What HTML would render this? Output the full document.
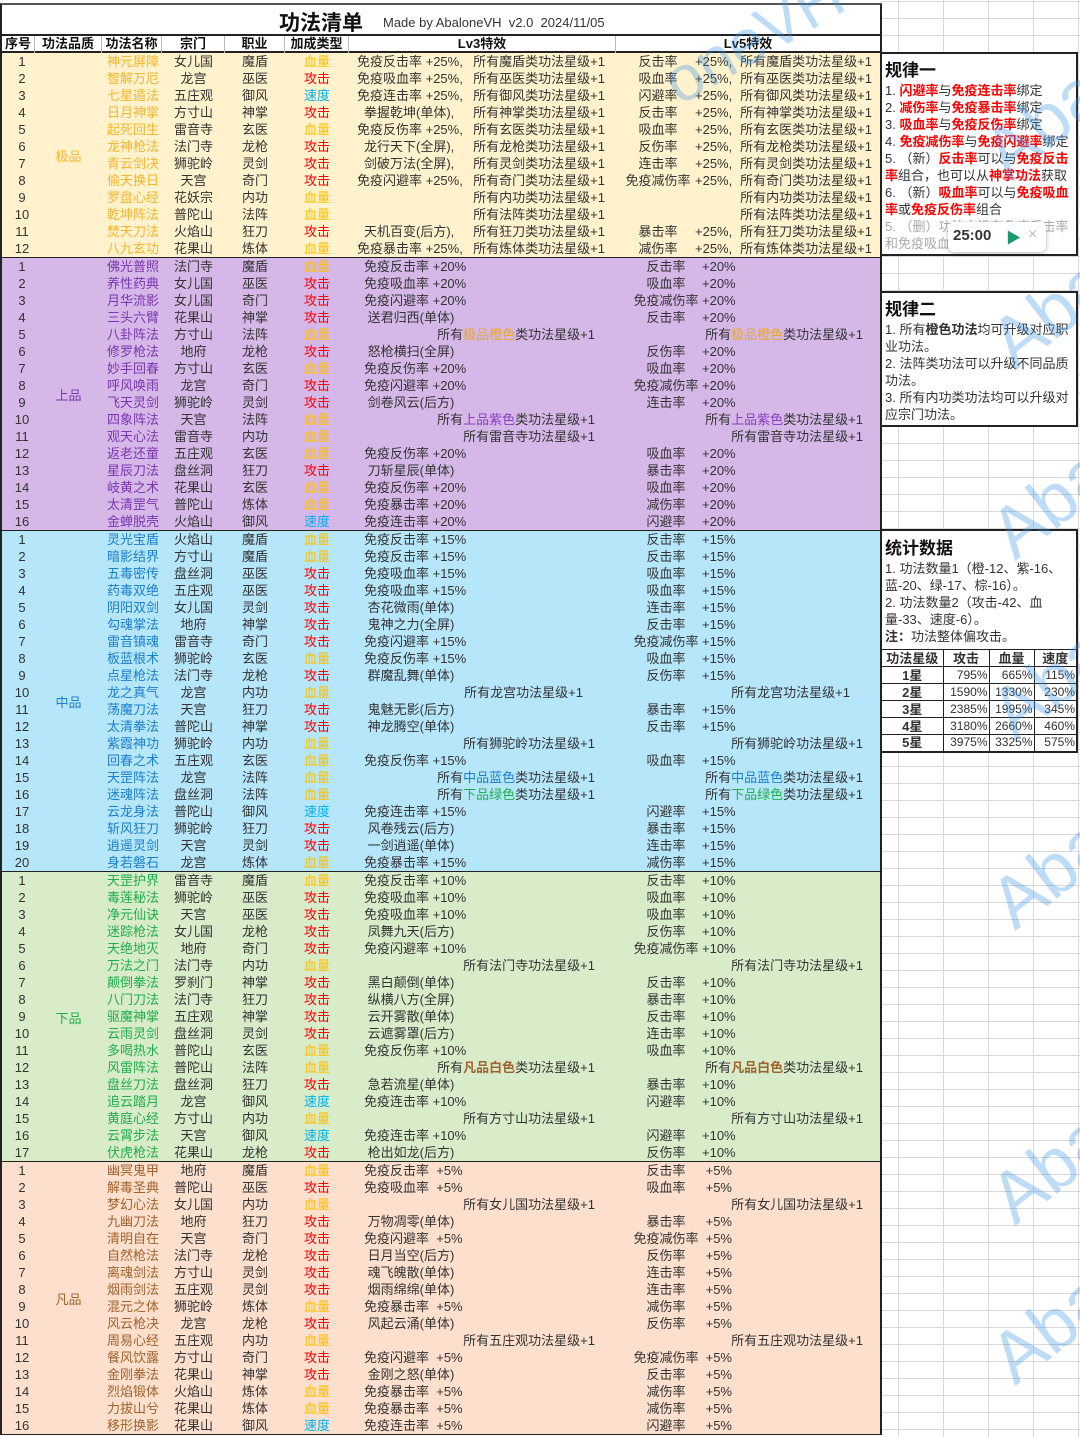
<!DOCTYPE html>
<html><head><meta charset="utf-8">
<style>
*{margin:0;padding:0;box-sizing:border-box}
body{width:1080px;height:1437px;overflow:hidden;background:#fff;font-family:"Liberation Sans","Noto Sans CJK SC",sans-serif;font-size:13px;color:#333;position:relative}
#grid{position:absolute;left:880px;top:0;width:200px;height:1437px;
background-image:linear-gradient(to right,#d9d9d9 1px,transparent 1px),linear-gradient(to bottom,#d9d9d9 1px,transparent 1px);
background-size:45px 17px;background-position:18px 1px}
#main{position:absolute;left:0;top:3px;width:882px;border-left:2px solid #222;border-right:2px solid #222;border-top:2px solid #555}
#title{height:31px;border-bottom:2px solid #222;position:relative;background:#fff}
#title .t1{position:absolute;left:277px;top:2px;font-size:21px;font-weight:bold;color:#111}
#title .t2{position:absolute;left:381px;top:10px;font-size:13px;color:#333;white-space:pre}
#hdr{height:17px;border-bottom:2px solid #222;position:relative;font-weight:bold;color:#111;line-height:16px;background:#fff}
#hdr span{position:absolute;top:0;text-align:center;height:17px;border-right:1px solid #bbb}
.sec{position:relative;border-bottom:1.5px solid #222}
.q{position:absolute;left:33px;width:67px;top:50%;margin-top:-9px;text-align:center;font-size:13px}
.r{position:relative;height:17px;line-height:17px;white-space:pre}
.r span{position:absolute;top:0}
.n{left:0;width:40px;text-align:center}
.m{left:100px;width:62px;text-align:center}
.s{left:160px;width:63px;text-align:center}
.j{left:223px;width:60px;text-align:center}
.t{left:283px;width:64px;text-align:center}
.h{color:#ffc000}.k{color:#f00}.v{color:#00b0f0}
.a{left:362px}
.b{right:285px}
.c{left:629px;width:70px;text-align:center}
.d{left:700px}
.e{right:17px}
.s1{background:#fff2cc}.s1 .m,.s1 .q{color:#f5b530}
.s1 .a{left:355px}.s1 .b{right:275px}.s1 .c{left:621px}.s1 .d{left:693px}.s1 .e{right:8px}
.s2{background:#d5b8e8}.s2 .m,.s2 .q{color:#7a35b0}
.s3{background:#b6e6fa}.s3 .m,.s3 .q{color:#1a7fcc}
.s4{background:#d8ecca}.s4 .m,.s4 .q{color:#1fae4a}
.s5{background:#fcdfcc}.s5 .m,.s5 .q{color:#a0632e}
.co{color:#e8a820}.cp{color:#8a3cc0}.cb{color:#1a7fcc}.cg{color:#1fae4a}.cw{color:#a0632e}
.box{position:absolute;left:880px;width:198px;background:#fff;border:2px solid #222;padding:0 3px;line-height:17px;font-size:13px;color:#333;overflow:hidden}
.box h3{font-size:17px;font-weight:bold;color:#111;line-height:22px}
.rd{color:#f00;font-weight:bold}
#st{position:absolute;left:880px;top:649px;width:198px;border:2px solid #222;border-top:1px solid #222;background:#fff;border-collapse:collapse;font-size:12px;table-layout:fixed}
#st td{border:1px solid #222;height:17px;line-height:15px;padding:0 1px;overflow:hidden;white-space:nowrap}
#st tr:first-child td{font-weight:bold;text-align:center;font-size:13px}
#st td:first-child{font-weight:bold;text-align:center;width:62px;font-size:13px}
#st td.x{text-align:right}
#timer{position:absolute;left:948px;top:222px;width:98px;height:30px;background:#fff;border-radius:6px;box-shadow:0 1px 5px rgba(0,0,0,.3)}
.wm{position:absolute;font-family:"Liberation Sans",sans-serif;color:rgba(60,150,230,.33);font-size:72px;transform-origin:left top;white-space:nowrap;pointer-events:none}
</style></head><body>
<div id="grid"></div>
<div id="main">
<div id="title"><span class="t1">功法清单</span><span class="t2">Made by AbaloneVH  v2.0  2024/11/05</span></div>
<div id="hdr">
<span style="left:0;width:33px">序号</span><span style="left:33px;width:67px">功法品质</span><span style="left:100px;width:60px">功法名称</span><span style="left:160px;width:63px">宗门</span><span style="left:223px;width:60px">职业</span><span style="left:283px;width:64px">加成类型</span><span style="left:347px;width:267px">Lv3特效</span><span style="left:614px;width:264px;border-right:none">Lv5特效</span>
</div>

<div class="sec s1"><span class="q">极品</span>
<div class="r"><span class="n">1</span><span class="m">神元屏障</span><span class="s">女儿国</span><span class="j">魔盾</span><span class="t h">血量</span><span class="a">免疫反击率 +25%,</span><span class="b">所有魔盾类功法星级+1</span><span class="c">反击率</span><span class="d">+25%,</span><span class="e">所有魔盾类功法星级+1</span></div>
<div class="r"><span class="n">2</span><span class="m">智解万厄</span><span class="s">龙宫</span><span class="j">巫医</span><span class="t k">攻击</span><span class="a">免疫吸血率 +25%,</span><span class="b">所有巫医类功法星级+1</span><span class="c">吸血率</span><span class="d">+25%,</span><span class="e">所有巫医类功法星级+1</span></div>
<div class="r"><span class="n">3</span><span class="m">七星遁法</span><span class="s">五庄观</span><span class="j">御风</span><span class="t v">速度</span><span class="a">免疫连击率 +25%,</span><span class="b">所有御风类功法星级+1</span><span class="c">闪避率</span><span class="d">+25%,</span><span class="e">所有御风类功法星级+1</span></div>
<div class="r"><span class="n">4</span><span class="m">日月神掌</span><span class="s">方寸山</span><span class="j">神掌</span><span class="t k">攻击</span><span class="a" style="left:362px">拳握乾坤(单体),</span><span class="b">所有神掌类功法星级+1</span><span class="c">反击率</span><span class="d">+25%,</span><span class="e">所有神掌类功法星级+1</span></div>
<div class="r"><span class="n">5</span><span class="m">起死回生</span><span class="s">雷音寺</span><span class="j">玄医</span><span class="t h">血量</span><span class="a">免疫反伤率 +25%,</span><span class="b">所有玄医类功法星级+1</span><span class="c">吸血率</span><span class="d">+25%,</span><span class="e">所有玄医类功法星级+1</span></div>
<div class="r"><span class="n">6</span><span class="m">龙神枪法</span><span class="s">法门寺</span><span class="j">龙枪</span><span class="t k">攻击</span><span class="a" style="left:362px">龙行天下(全屏),</span><span class="b">所有龙枪类功法星级+1</span><span class="c">反伤率</span><span class="d">+25%,</span><span class="e">所有龙枪类功法星级+1</span></div>
<div class="r"><span class="n">7</span><span class="m">青云剑决</span><span class="s">狮驼岭</span><span class="j">灵剑</span><span class="t k">攻击</span><span class="a" style="left:362px">剑破万法(全屏),</span><span class="b">所有灵剑类功法星级+1</span><span class="c">连击率</span><span class="d">+25%,</span><span class="e">所有灵剑类功法星级+1</span></div>
<div class="r"><span class="n">8</span><span class="m">偷天换日</span><span class="s">天宫</span><span class="j">奇门</span><span class="t k">攻击</span><span class="a">免疫闪避率 +25%,</span><span class="b">所有奇门类功法星级+1</span><span class="c">免疫减伤率</span><span class="d">+25%,</span><span class="e">所有奇门类功法星级+1</span></div>
<div class="r"><span class="n">9</span><span class="m">罗盘心经</span><span class="s">花妖宗</span><span class="j">内功</span><span class="t h">血量</span><span class="b">所有内功类功法星级+1</span><span class="e">所有内功类功法星级+1</span></div>
<div class="r"><span class="n">10</span><span class="m">乾坤阵法</span><span class="s">普陀山</span><span class="j">法阵</span><span class="t h">血量</span><span class="b">所有法阵类功法星级+1</span><span class="e">所有法阵类功法星级+1</span></div>
<div class="r"><span class="n">11</span><span class="m">焚天刀法</span><span class="s">火焰山</span><span class="j">狂刀</span><span class="t k">攻击</span><span class="a" style="left:362px">天机百变(后方),</span><span class="b">所有狂刀类功法星级+1</span><span class="c">暴击率</span><span class="d">+25%,</span><span class="e">所有狂刀类功法星级+1</span></div>
<div class="r"><span class="n">12</span><span class="m">八九玄功</span><span class="s">花果山</span><span class="j">炼体</span><span class="t h">血量</span><span class="a">免疫暴击率 +25%,</span><span class="b">所有炼体类功法星级+1</span><span class="c">减伤率</span><span class="d">+25%,</span><span class="e">所有炼体类功法星级+1</span></div>
</div>

<div class="sec s2"><span class="q">上品</span>
<div class="r"><span class="n">1</span><span class="m">佛光普照</span><span class="s">法门寺</span><span class="j">魔盾</span><span class="t h">血量</span><span class="a">免疫反击率 +20%</span><span class="c">反击率</span><span class="d">+20%</span></div>
<div class="r"><span class="n">2</span><span class="m">养性药典</span><span class="s">女儿国</span><span class="j">巫医</span><span class="t k">攻击</span><span class="a">免疫吸血率 +20%</span><span class="c">吸血率</span><span class="d">+20%</span></div>
<div class="r"><span class="n">3</span><span class="m">月华流影</span><span class="s">女儿国</span><span class="j">奇门</span><span class="t k">攻击</span><span class="a">免疫闪避率 +20%</span><span class="c">免疫减伤率</span><span class="d">+20%</span></div>
<div class="r"><span class="n">4</span><span class="m">三头六臂</span><span class="s">花果山</span><span class="j">神掌</span><span class="t k">攻击</span><span class="a"> 送君归西(单体)</span><span class="c">反击率</span><span class="d">+20%</span></div>
<div class="r"><span class="n">5</span><span class="m">八卦阵法</span><span class="s">方寸山</span><span class="j">法阵</span><span class="t h">血量</span><span class="b">所有<span class="co" style="position:static">极品橙色</span>类功法星级+1</span><span class="e">所有<span class="co" style="position:static">极品橙色</span>类功法星级+1</span></div>
<div class="r"><span class="n">6</span><span class="m">修罗枪法</span><span class="s">地府</span><span class="j">龙枪</span><span class="t k">攻击</span><span class="a"> 怒枪横扫(全屏)</span><span class="c">反伤率</span><span class="d">+20%</span></div>
<div class="r"><span class="n">7</span><span class="m">妙手回春</span><span class="s">方寸山</span><span class="j">玄医</span><span class="t h">血量</span><span class="a">免疫反伤率 +20%</span><span class="c">吸血率</span><span class="d">+20%</span></div>
<div class="r"><span class="n">8</span><span class="m">呼风唤雨</span><span class="s">龙宫</span><span class="j">奇门</span><span class="t k">攻击</span><span class="a">免疫闪避率 +20%</span><span class="c">免疫减伤率</span><span class="d">+20%</span></div>
<div class="r"><span class="n">9</span><span class="m">飞天灵剑</span><span class="s">狮驼岭</span><span class="j">灵剑</span><span class="t k">攻击</span><span class="a"> 剑卷风云(后方)</span><span class="c">连击率</span><span class="d">+20%</span></div>
<div class="r"><span class="n">10</span><span class="m">四象阵法</span><span class="s">天宫</span><span class="j">法阵</span><span class="t h">血量</span><span class="b">所有<span class="cp" style="position:static">上品紫色</span>类功法星级+1</span><span class="e">所有<span class="cp" style="position:static">上品紫色</span>类功法星级+1</span></div>
<div class="r"><span class="n">11</span><span class="m">观天心法</span><span class="s">雷音寺</span><span class="j">内功</span><span class="t h">血量</span><span class="b">所有雷音寺功法星级+1</span><span class="e">所有雷音寺功法星级+1</span></div>
<div class="r"><span class="n">12</span><span class="m">返老还童</span><span class="s">五庄观</span><span class="j">玄医</span><span class="t h">血量</span><span class="a">免疫反伤率 +20%</span><span class="c">吸血率</span><span class="d">+20%</span></div>
<div class="r"><span class="n">13</span><span class="m">星辰刀法</span><span class="s">盘丝洞</span><span class="j">狂刀</span><span class="t k">攻击</span><span class="a"> 刀斩星辰(单体)</span><span class="c">暴击率</span><span class="d">+20%</span></div>
<div class="r"><span class="n">14</span><span class="m">岐黄之术</span><span class="s">花果山</span><span class="j">玄医</span><span class="t h">血量</span><span class="a">免疫反伤率 +20%</span><span class="c">吸血率</span><span class="d">+20%</span></div>
<div class="r"><span class="n">15</span><span class="m">太清罡气</span><span class="s">普陀山</span><span class="j">炼体</span><span class="t h">血量</span><span class="a">免疫暴击率 +20%</span><span class="c">减伤率</span><span class="d">+20%</span></div>
<div class="r"><span class="n">16</span><span class="m">金蝉脱壳</span><span class="s">火焰山</span><span class="j">御风</span><span class="t v">速度</span><span class="a">免疫连击率 +20%</span><span class="c">闪避率</span><span class="d">+20%</span></div>
</div>

<div class="sec s3"><span class="q">中品</span>
<div class="r"><span class="n">1</span><span class="m">灵光宝盾</span><span class="s">火焰山</span><span class="j">魔盾</span><span class="t h">血量</span><span class="a">免疫反击率 +15%</span><span class="c">反击率</span><span class="d">+15%</span></div>
<div class="r"><span class="n">2</span><span class="m">暗影结界</span><span class="s">方寸山</span><span class="j">魔盾</span><span class="t h">血量</span><span class="a">免疫反击率 +15%</span><span class="c">反击率</span><span class="d">+15%</span></div>
<div class="r"><span class="n">3</span><span class="m">五毒密传</span><span class="s">盘丝洞</span><span class="j">巫医</span><span class="t k">攻击</span><span class="a">免疫吸血率 +15%</span><span class="c">吸血率</span><span class="d">+15%</span></div>
<div class="r"><span class="n">4</span><span class="m">药毒双绝</span><span class="s">五庄观</span><span class="j">巫医</span><span class="t k">攻击</span><span class="a">免疫吸血率 +15%</span><span class="c">吸血率</span><span class="d">+15%</span></div>
<div class="r"><span class="n">5</span><span class="m">阴阳双剑</span><span class="s">女儿国</span><span class="j">灵剑</span><span class="t k">攻击</span><span class="a"> 杏花微雨(单体)</span><span class="c">连击率</span><span class="d">+15%</span></div>
<div class="r"><span class="n">6</span><span class="m">勾魂掌法</span><span class="s">地府</span><span class="j">神掌</span><span class="t k">攻击</span><span class="a"> 鬼神之力(全屏)</span><span class="c">反击率</span><span class="d">+15%</span></div>
<div class="r"><span class="n">7</span><span class="m">雷音镇魂</span><span class="s">雷音寺</span><span class="j">奇门</span><span class="t k">攻击</span><span class="a">免疫闪避率 +15%</span><span class="c">免疫减伤率</span><span class="d">+15%</span></div>
<div class="r"><span class="n">8</span><span class="m">板蓝根术</span><span class="s">狮驼岭</span><span class="j">玄医</span><span class="t h">血量</span><span class="a">免疫反伤率 +15%</span><span class="c">吸血率</span><span class="d">+15%</span></div>
<div class="r"><span class="n">9</span><span class="m">点星枪法</span><span class="s">法门寺</span><span class="j">龙枪</span><span class="t k">攻击</span><span class="a"> 群魔乱舞(单体)</span><span class="c">反伤率</span><span class="d">+15%</span></div>
<div class="r"><span class="n">10</span><span class="m">龙之真气</span><span class="s">龙宫</span><span class="j">内功</span><span class="t h">血量</span><span class="b" style="right:297px">所有龙宫功法星级+1</span><span class="e" style="right:30px">所有龙宫功法星级+1</span></div>
<div class="r"><span class="n">11</span><span class="m">荡魔刀法</span><span class="s">天宫</span><span class="j">狂刀</span><span class="t k">攻击</span><span class="a"> 鬼魅无影(后方)</span><span class="c">暴击率</span><span class="d">+15%</span></div>
<div class="r"><span class="n">12</span><span class="m">太清拳法</span><span class="s">普陀山</span><span class="j">神掌</span><span class="t k">攻击</span><span class="a"> 神龙腾空(单体)</span><span class="c">反击率</span><span class="d">+15%</span></div>
<div class="r"><span class="n">13</span><span class="m">紫霞神功</span><span class="s">狮驼岭</span><span class="j">内功</span><span class="t h">血量</span><span class="b">所有狮驼岭功法星级+1</span><span class="e">所有狮驼岭功法星级+1</span></div>
<div class="r"><span class="n">14</span><span class="m">回春之术</span><span class="s">五庄观</span><span class="j">玄医</span><span class="t h">血量</span><span class="a">免疫反伤率 +15%</span><span class="c">吸血率</span><span class="d">+15%</span></div>
<div class="r"><span class="n">15</span><span class="m">天罡阵法</span><span class="s">龙宫</span><span class="j">法阵</span><span class="t h">血量</span><span class="b">所有<span class="cb" style="position:static">中品蓝色</span>类功法星级+1</span><span class="e">所有<span class="cb" style="position:static">中品蓝色</span>类功法星级+1</span></div>
<div class="r"><span class="n">16</span><span class="m">迷魂阵法</span><span class="s">盘丝洞</span><span class="j">法阵</span><span class="t h">血量</span><span class="b">所有<span class="cg" style="position:static">下品绿色</span>类功法星级+1</span><span class="e">所有<span class="cg" style="position:static">下品绿色</span>类功法星级+1</span></div>
<div class="r"><span class="n">17</span><span class="m">云龙身法</span><span class="s">普陀山</span><span class="j">御风</span><span class="t v">速度</span><span class="a">免疫连击率 +15%</span><span class="c">闪避率</span><span class="d">+15%</span></div>
<div class="r"><span class="n">18</span><span class="m">斩风狂刀</span><span class="s">狮驼岭</span><span class="j">狂刀</span><span class="t k">攻击</span><span class="a"> 风卷残云(后方)</span><span class="c">暴击率</span><span class="d">+15%</span></div>
<div class="r"><span class="n">19</span><span class="m">逍遥灵剑</span><span class="s">天宫</span><span class="j">灵剑</span><span class="t k">攻击</span><span class="a"> 一剑逍遥(单体)</span><span class="c">连击率</span><span class="d">+15%</span></div>
<div class="r"><span class="n">20</span><span class="m">身若磐石</span><span class="s">龙宫</span><span class="j">炼体</span><span class="t h">血量</span><span class="a">免疫暴击率 +15%</span><span class="c">减伤率</span><span class="d">+15%</span></div>
</div>

<div class="sec s4"><span class="q">下品</span>
<div class="r"><span class="n">1</span><span class="m">天罡护界</span><span class="s">雷音寺</span><span class="j">魔盾</span><span class="t h">血量</span><span class="a">免疫反击率 +10%</span><span class="c">反击率</span><span class="d">+10%</span></div>
<div class="r"><span class="n">2</span><span class="m">毒莲秘法</span><span class="s">狮驼岭</span><span class="j">巫医</span><span class="t k">攻击</span><span class="a">免疫吸血率 +10%</span><span class="c">吸血率</span><span class="d">+10%</span></div>
<div class="r"><span class="n">3</span><span class="m">净元仙诀</span><span class="s">天宫</span><span class="j">巫医</span><span class="t k">攻击</span><span class="a">免疫吸血率 +10%</span><span class="c">吸血率</span><span class="d">+10%</span></div>
<div class="r"><span class="n">4</span><span class="m">迷踪枪法</span><span class="s">女儿国</span><span class="j">龙枪</span><span class="t k">攻击</span><span class="a"> 凤舞九天(后方)</span><span class="c">反伤率</span><span class="d">+10%</span></div>
<div class="r"><span class="n">5</span><span class="m">天绝地灭</span><span class="s">地府</span><span class="j">奇门</span><span class="t k">攻击</span><span class="a">免疫闪避率 +10%</span><span class="c">免疫减伤率</span><span class="d">+10%</span></div>
<div class="r"><span class="n">6</span><span class="m">万法之门</span><span class="s">法门寺</span><span class="j">内功</span><span class="t h">血量</span><span class="b">所有法门寺功法星级+1</span><span class="e">所有法门寺功法星级+1</span></div>
<div class="r"><span class="n">7</span><span class="m">颠倒拳法</span><span class="s">罗刹门</span><span class="j">神掌</span><span class="t k">攻击</span><span class="a"> 黑白颠倒(单体)</span><span class="c">反击率</span><span class="d">+10%</span></div>
<div class="r"><span class="n">8</span><span class="m">八门刀法</span><span class="s">法门寺</span><span class="j">狂刀</span><span class="t k">攻击</span><span class="a"> 纵横八方(全屏)</span><span class="c">暴击率</span><span class="d">+10%</span></div>
<div class="r"><span class="n">9</span><span class="m">驱魔神掌</span><span class="s">五庄观</span><span class="j">神掌</span><span class="t k">攻击</span><span class="a"> 云开雾散(单体)</span><span class="c">反击率</span><span class="d">+10%</span></div>
<div class="r"><span class="n">10</span><span class="m">云雨灵剑</span><span class="s">盘丝洞</span><span class="j">灵剑</span><span class="t k">攻击</span><span class="a"> 云遮雾罩(后方)</span><span class="c">连击率</span><span class="d">+10%</span></div>
<div class="r"><span class="n">11</span><span class="m">多喝热水</span><span class="s">普陀山</span><span class="j">玄医</span><span class="t h">血量</span><span class="a">免疫反伤率 +10%</span><span class="c">吸血率</span><span class="d">+10%</span></div>
<div class="r"><span class="n">12</span><span class="m">风雷阵法</span><span class="s">普陀山</span><span class="j">法阵</span><span class="t h">血量</span><span class="b">所有<span class="cw" style="position:static;font-weight:bold">凡品白色</span>类功法星级+1</span><span class="e">所有<span class="cw" style="position:static;font-weight:bold">凡品白色</span>类功法星级+1</span></div>
<div class="r"><span class="n">13</span><span class="m">盘丝刀法</span><span class="s">盘丝洞</span><span class="j">狂刀</span><span class="t k">攻击</span><span class="a"> 急若流星(单体)</span><span class="c">暴击率</span><span class="d">+10%</span></div>
<div class="r"><span class="n">14</span><span class="m">追云踏月</span><span class="s">龙宫</span><span class="j">御风</span><span class="t v">速度</span><span class="a">免疫连击率 +10%</span><span class="c">闪避率</span><span class="d">+10%</span></div>
<div class="r"><span class="n">15</span><span class="m">黄庭心经</span><span class="s">方寸山</span><span class="j">内功</span><span class="t h">血量</span><span class="b">所有方寸山功法星级+1</span><span class="e">所有方寸山功法星级+1</span></div>
<div class="r"><span class="n">16</span><span class="m">云霄步法</span><span class="s">天宫</span><span class="j">御风</span><span class="t v">速度</span><span class="a">免疫连击率 +10%</span><span class="c">闪避率</span><span class="d">+10%</span></div>
<div class="r"><span class="n">17</span><span class="m">伏虎枪法</span><span class="s">花果山</span><span class="j">龙枪</span><span class="t k">攻击</span><span class="a"> 枪出如龙(后方)</span><span class="c">反伤率</span><span class="d">+10%</span></div>
</div>

<div class="sec s5"><span class="q">凡品</span>
<div class="r"><span class="n">1</span><span class="m">幽冥鬼甲</span><span class="s">地府</span><span class="j">魔盾</span><span class="t h">血量</span><span class="a">免疫反击率  +5%</span><span class="c">反击率</span><span class="d"> +5%</span></div>
<div class="r"><span class="n">2</span><span class="m">解毒圣典</span><span class="s">普陀山</span><span class="j">巫医</span><span class="t k">攻击</span><span class="a">免疫吸血率  +5%</span><span class="c">吸血率</span><span class="d"> +5%</span></div>
<div class="r"><span class="n">3</span><span class="m">梦幻心法</span><span class="s">女儿国</span><span class="j">内功</span><span class="t h">血量</span><span class="b">所有女儿国功法星级+1</span><span class="e">所有女儿国功法星级+1</span></div>
<div class="r"><span class="n">4</span><span class="m">九幽刀法</span><span class="s">地府</span><span class="j">狂刀</span><span class="t k">攻击</span><span class="a"> 万物凋零(单体)</span><span class="c">暴击率</span><span class="d"> +5%</span></div>
<div class="r"><span class="n">5</span><span class="m">清明自在</span><span class="s">天宫</span><span class="j">奇门</span><span class="t k">攻击</span><span class="a">免疫闪避率  +5%</span><span class="c">免疫减伤率</span><span class="d"> +5%</span></div>
<div class="r"><span class="n">6</span><span class="m">自然枪法</span><span class="s">法门寺</span><span class="j">龙枪</span><span class="t k">攻击</span><span class="a"> 日月当空(后方)</span><span class="c">反伤率</span><span class="d"> +5%</span></div>
<div class="r"><span class="n">7</span><span class="m">离魂剑法</span><span class="s">方寸山</span><span class="j">灵剑</span><span class="t k">攻击</span><span class="a"> 魂飞魄散(单体)</span><span class="c">连击率</span><span class="d"> +5%</span></div>
<div class="r"><span class="n">8</span><span class="m">烟雨剑法</span><span class="s">五庄观</span><span class="j">灵剑</span><span class="t k">攻击</span><span class="a"> 烟雨绵绵(单体)</span><span class="c">连击率</span><span class="d"> +5%</span></div>
<div class="r"><span class="n">9</span><span class="m">混元之体</span><span class="s">狮驼岭</span><span class="j">炼体</span><span class="t h">血量</span><span class="a">免疫暴击率  +5%</span><span class="c">减伤率</span><span class="d"> +5%</span></div>
<div class="r"><span class="n">10</span><span class="m">风云枪决</span><span class="s">龙宫</span><span class="j">龙枪</span><span class="t k">攻击</span><span class="a"> 风起云涌(单体)</span><span class="c">反伤率</span><span class="d"> +5%</span></div>
<div class="r"><span class="n">11</span><span class="m">周易心经</span><span class="s">五庄观</span><span class="j">内功</span><span class="t h">血量</span><span class="b">所有五庄观功法星级+1</span><span class="e">所有五庄观功法星级+1</span></div>
<div class="r"><span class="n">12</span><span class="m">餐风饮露</span><span class="s">方寸山</span><span class="j">奇门</span><span class="t k">攻击</span><span class="a">免疫闪避率  +5%</span><span class="c">免疫减伤率</span><span class="d"> +5%</span></div>
<div class="r"><span class="n">13</span><span class="m">金刚拳法</span><span class="s">花果山</span><span class="j">神掌</span><span class="t k">攻击</span><span class="a"> 金刚之怒(单体)</span><span class="c">反击率</span><span class="d"> +5%</span></div>
<div class="r"><span class="n">14</span><span class="m">烈焰锻体</span><span class="s">火焰山</span><span class="j">炼体</span><span class="t h">血量</span><span class="a">免疫暴击率  +5%</span><span class="c">减伤率</span><span class="d"> +5%</span></div>
<div class="r"><span class="n">15</span><span class="m">力拔山兮</span><span class="s">花果山</span><span class="j">炼体</span><span class="t h">血量</span><span class="a">免疫暴击率  +5%</span><span class="c">减伤率</span><span class="d"> +5%</span></div>
<div class="r"><span class="n">16</span><span class="m">移形换影</span><span class="s">花果山</span><span class="j">御风</span><span class="t v">速度</span><span class="a">免疫连击率  +5%</span><span class="c">闪避率</span><span class="d"> +5%</span></div>
</div>
</div>

<div class="box" style="top:52px;height:204px;padding-top:6px">
<h3>规律一</h3>
<div>1. <span class="rd">闪避率</span>与<span class="rd">免疫连击率</span>绑定</div>
<div>2. <span class="rd">减伤率</span>与<span class="rd">免疫暴击率</span>绑定</div>
<div>3. <span class="rd">吸血率</span>与<span class="rd">免疫反伤率</span>绑定</div>
<div>4. <span class="rd">免疫减伤率</span>与<span class="rd">免疫闪避率</span>绑定</div>
<div>5. （新）<span class="rd">反击率</span>可以与<span class="rd">免疫反击率</span>组合，也可以从<span class="rd">神掌功法</span>获取</div>
<div>6. （新）<span class="rd">吸血率</span>可以与<span class="rd">免疫吸血率</span>或<span class="rd">免疫反伤率</span>组合</div>
<div style="color:#aaa">5. （删）功法中没有免疫反击率和免疫吸血率</div>
</div>
<div id="timer"><span style="position:absolute;left:5px;top:5px;font-size:15px;font-weight:bold;color:#333">25:00</span><span style="position:absolute;left:58px;top:5px;font-size:15px;color:#1a9a6a">▶</span><span style="position:absolute;left:80px;top:4px;font-size:16px;color:#bbb">×</span></div>

<div class="box" style="top:291px;height:136px;padding-top:6px">
<h3>规律二</h3>
<div>1. 所有<b>橙色功法</b>均可升级对应职业功法。</div>
<div>2. 法阵类功法可以升级不同品质功法。</div>
<div>3. 所有内功类功法均可以升级对应宗门功法。</div>
</div>

<div class="box" style="top:529px;height:122px;padding-top:7px;border-bottom:none">
<h3>统计数据</h3>
<div>1. 功法数量1（橙-12、紫-16、蓝-20、绿-17、棕-16）。</div>
<div>2. 功法数量2（攻击-42、血量-33、速度-6）。</div>
<div><b>注：</b>功法整体偏攻击。</div>
</div>
<table id="st">
<tr><td style="width:62px">功法星级</td><td style="width:46px">攻击</td><td style="width:45px">血量</td><td>速度</td></tr>
<tr><td>1星</td><td class="x">795%</td><td class="x">665%</td><td class="x">115%</td></tr>
<tr><td>2星</td><td class="x">1590%</td><td class="x">1330%</td><td class="x">230%</td></tr>
<tr><td>3星</td><td class="x">2385%</td><td class="x">1995%</td><td class="x">345%</td></tr>
<tr><td>4星</td><td class="x">3180%</td><td class="x">2660%</td><td class="x">460%</td></tr>
<tr><td>5星</td><td class="x">3975%</td><td class="x">3325%</td><td class="x">575%</td></tr>
</table>

<div class="wm" style="left:650px;top:55px;transform:rotate(-30deg);font-size:64px">oneVH</div>
<div class="wm" style="left:968px;top:130px;transform:rotate(-38deg)">Abal</div>
<div class="wm" style="left:975px;top:320px;transform:rotate(-38deg)">Abal</div>
<div class="wm" style="left:975px;top:510px;transform:rotate(-38deg)">Abal</div>
<div class="wm" style="left:975px;top:690px;transform:rotate(-38deg)">Abal</div>
<div class="wm" style="left:975px;top:880px;transform:rotate(-38deg)">Abal</div>
<div class="wm" style="left:975px;top:1175px;transform:rotate(-38deg)">Abal</div>
<div class="wm" style="left:975px;top:1335px;transform:rotate(-38deg)">Abal</div>
</body></html>
